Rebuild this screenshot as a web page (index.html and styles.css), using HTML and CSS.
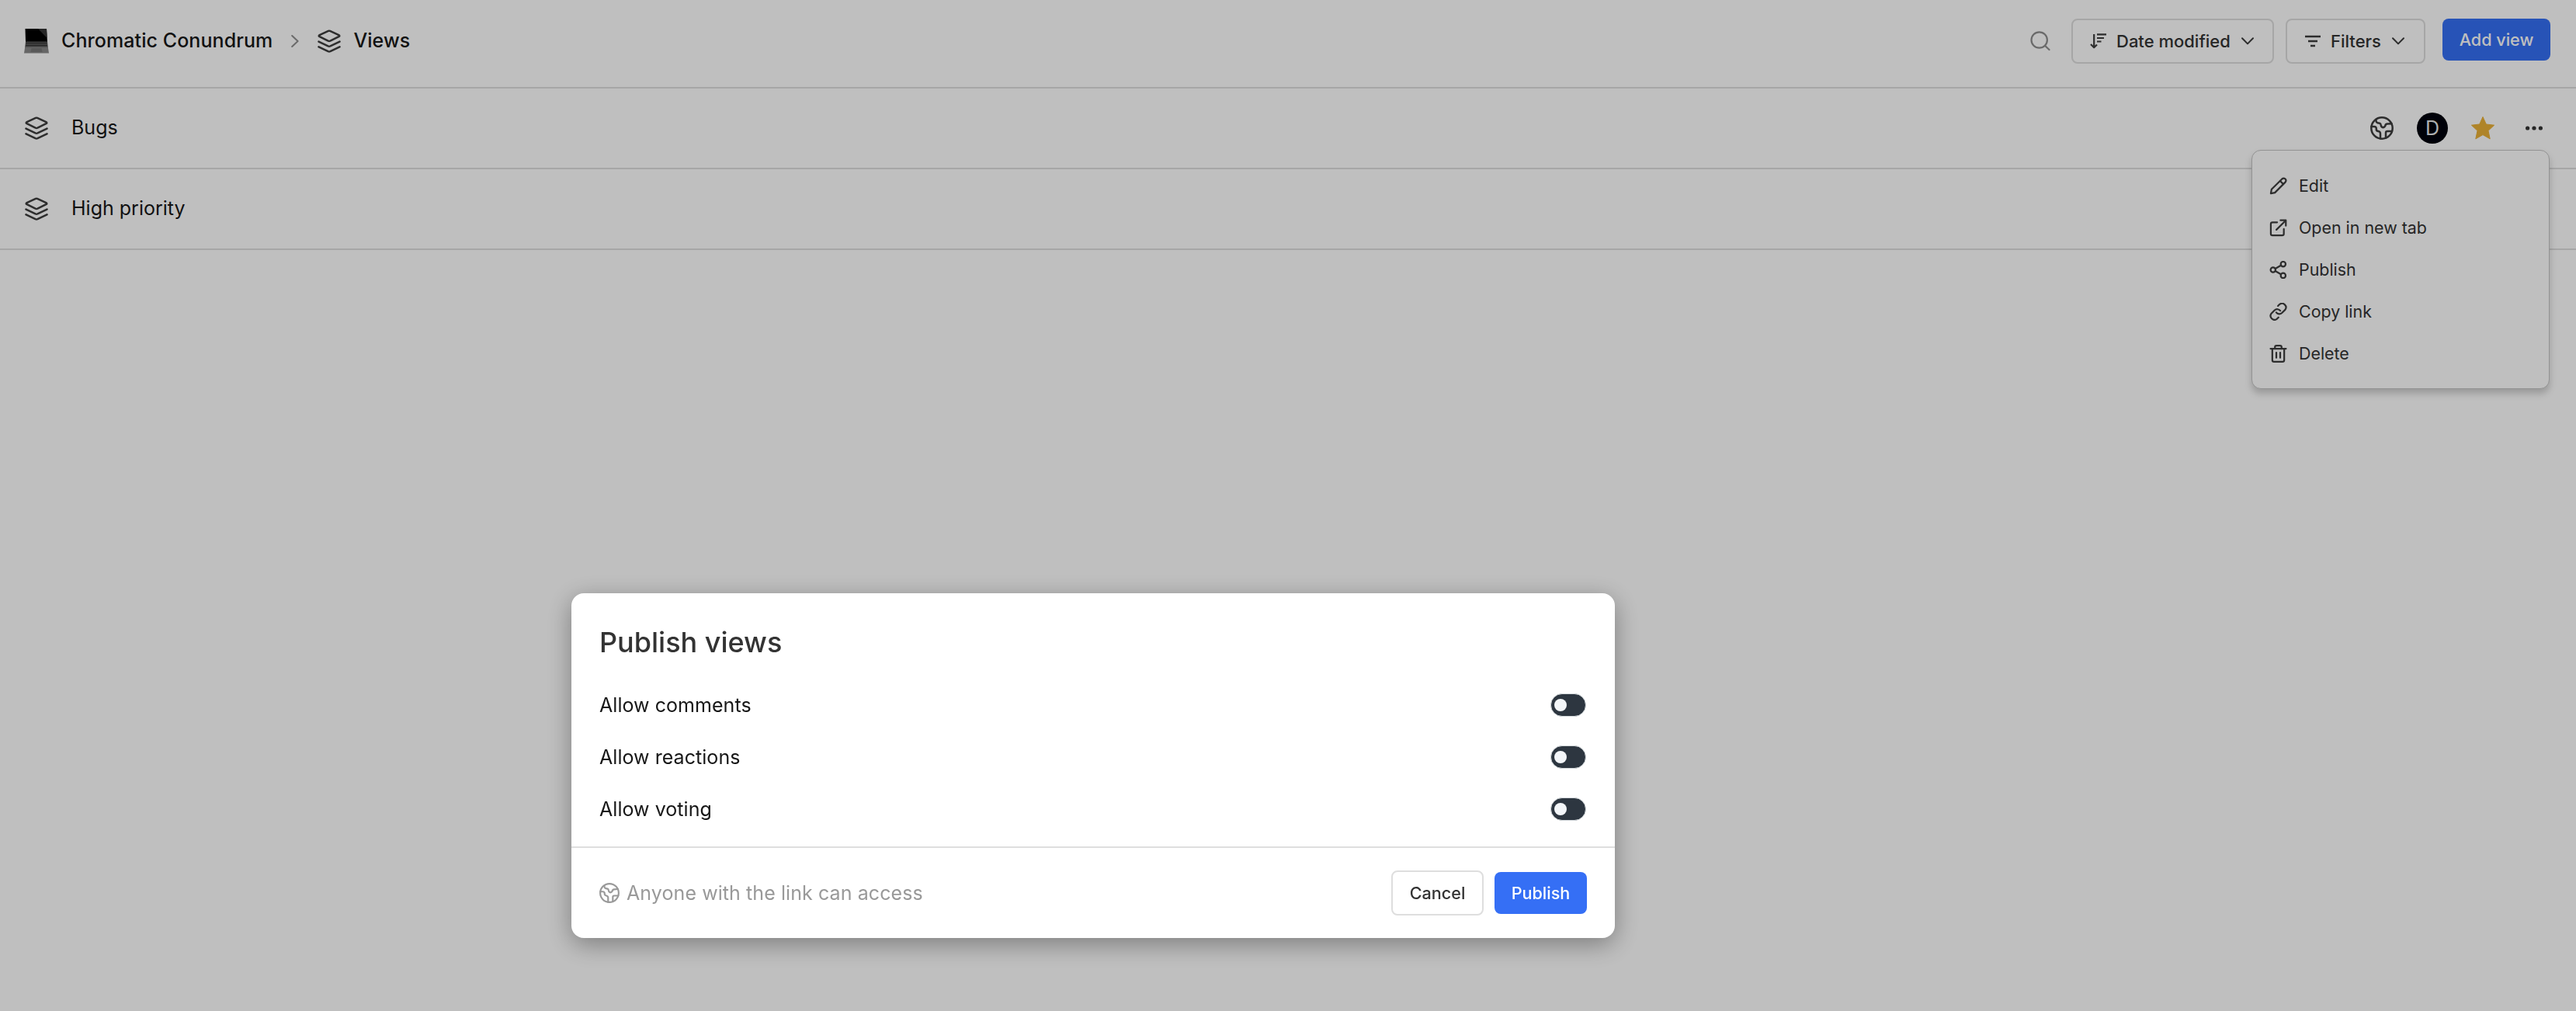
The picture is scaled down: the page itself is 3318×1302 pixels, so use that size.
FILE: index.html
```html
<!DOCTYPE html>
<html lang="en">
<head>
    <meta charset="UTF-8">
    <meta name="viewport" content="width=device-width, initial-scale=1.0">
    <title>Views</title>
    <link rel="stylesheet" href="styles.css">
</head>
<body>
    <!-- Shared icons -->
    <svg class="sprite">
        <symbol id="icon-layers" viewBox="0 0 30 30">
            <path d="M13.9 1.9 2.6 7.2Q.8 8.2 2.6 9.2L13.6 14.6Q15 15.2 16.4 14.6L27.4 9.2Q29.2 8.2 27.4 7.2L16.1 1.9Q15 1.4 13.9 1.9Z"/>
            <path d="M1.5 15.6 13.6 21.4Q15 22 16.4 21.4L28.5 15.6"/>
            <path d="M1.5 22.4 13.6 28.2Q15 28.8 16.4 28.2L28.5 22.4"/>
        </symbol>
        <symbol id="icon-globe" viewBox="0 0 30 30">
            <circle cx="15" cy="15" r="13.7"/>
            <path d="M7.5 4V5.8Q7.6 7.8 9.5 8.2L12 8.8Q13.3 9.2 13.6 10.6L14.2 12.8Q15.8 15 18 13.6L19.2 12.4Q19.5 9.8 22 9.6L27.5 9.2"/>
            <path d="M1.4 13 5 13Q7.3 13 7.8 15.3V17Q8 18.6 10.3 19 13 19.5 13 22V28.5"/>
            <path d="M20 27.8V21Q20 19 22 19H28"/>
        </symbol>
        <symbol id="icon-caret" viewBox="0 0 16 10">
            <path d="M1 1.2 8 8.4 15 1.2"/>
        </symbol>
    </svg>

    <header class="header">
        <div class="breadcrumb">
            <svg class="laptop" viewBox="0 0 32 32">
                <path d="M1.5 0H29L30 17H2Z" fill="#000"/>
                <path d="M18 0H29L29.6 12Z" fill="#333"/>
                <path d="M2 16.5H30L30.8 24H1.2Z" fill="#555"/>
                <path d="M2.5 18.5H29.5M2.2 21.5H30" stroke="#333" stroke-width="1"/>
                <path d="M1.2 23.5H30.8L32 31.5H0Z" fill="#898989"/>
                <path d="M9.5 25H22.5L23.5 30H8.5Z" fill="#777"/>
            </svg>
            <span class="crumb">Chromatic Conundrum</span>
            <svg class="icon separator" viewBox="0 0 10 16"><path d="M1.2 1 8.6 8 1.2 15"/></svg>
            <svg class="icon layers"><use href="#icon-layers"/></svg>
            <span class="crumb">Views</span>
        </div>
        <div class="actions">
            <svg class="icon search" viewBox="0 0 26 26"><circle cx="11.7" cy="11.5" r="10.2"/><path d="M19.2 19 24.5 24"/></svg>
            <button class="btn sort-btn">
                <svg class="icon sort" viewBox="0 0 22 20"><path d="M5.2 1V18M1 14 5.2 18.2 9 14.5M9 1.4H21M9 6H18M9 10.5H14.5"/></svg>
                <span>Date modified</span>
                <svg class="icon caret"><use href="#icon-caret"/></svg>
            </button>
            <button class="btn filter-btn">
                <svg class="icon filter" viewBox="0 0 20 16"><path d="M0 2H20M4 8H16M7 14H13"/></svg>
                <span>Filters</span>
                <svg class="icon caret"><use href="#icon-caret"/></svg>
            </button>
            <button class="btn btn-primary add-btn">Add view</button>
        </div>
    </header>

    <main>
        <div class="row">
            <svg class="icon layers"><use href="#icon-layers"/></svg>
            <span class="row-name">Bugs</span>
            <div class="row-actions">
                <svg class="icon globe"><use href="#icon-globe"/></svg>
                <span class="avatar">D</span>
                <svg class="star" viewBox="0 0 30 30"><path d="M15 .5 19.3 10 29.6 11.2 22 18.3 24.2 28.8 15 23.6 5.8 28.8 8 18.3.4 11.2 10.7 10Z"/></svg>
                <svg class="more" viewBox="0 0 22 6"><circle cx="2.6" cy="3" r="2.6"/><circle cx="11" cy="3" r="2.6"/><circle cx="19.4" cy="3" r="2.6"/></svg>
            </div>
        </div>
        <div class="row">
            <svg class="icon layers"><use href="#icon-layers"/></svg>
            <span class="row-name">High priority</span>
        </div>
    </main>

    <div class="menu">
        <div class="menu-item">
            <svg class="icon" viewBox="0 0 24 24"><path d="M2 22 3 16.5 16.8 2.8Q19.2.6 21.5 2.6 23.4 4.8 21.2 7.2L7.5 21Z"/><path d="M14.5 5.2 18.8 9.5"/></svg>
            <span>Edit</span>
        </div>
        <div class="menu-item">
            <svg class="icon" viewBox="0 0 24 24"><path d="M10.5 4.5H4.2Q2 4.5 2 6.7V19.8Q2 22 4.2 22H17.3Q19.5 22 19.5 19.8V13.5M15 1.8H22.2V9M22 2 9.5 14.5"/></svg>
            <span>Open in new tab</span>
        </div>
        <div class="menu-item">
            <svg class="icon" viewBox="0 0 24 24"><circle cx="5" cy="12" r="3.3"/><circle cx="18.6" cy="4.3" r="3.3"/><circle cx="18.6" cy="19.7" r="3.3"/><path d="M8 10.4 15.6 6M8 13.6 15.6 18"/></svg>
            <span>Publish</span>
        </div>
        <div class="menu-item">
            <svg class="icon" viewBox="0 0 24 24"><path d="M9.3 12.9A5.2 5.2 0 0 0 16.9 13.6L21.3 9.3A5.3 5.3 0 0 0 13.9 1.9L11.6 4.2M14.7 10.6A5.2 5.2 0 0 0 7.1 9.9L2.7 14.3A5.3 5.3 0 0 0 10.1 21.7L12.3 19.5"/></svg>
            <span>Copy link</span>
        </div>
        <div class="menu-item">
            <svg class="icon" viewBox="0 0 24 24"><path d="M1.6 5.3H22.4M7.5 5V3.4Q7.5 1.2 9.7 1.2H14.3Q16.5 1.2 16.5 3.4V5M4 5.5V20.5Q4 22.8 6.3 22.8H17.7Q20 22.8 20 20.5V5.5M9.4 10.5V17.5M14.6 10.5V17.5"/></svg>
            <span>Delete</span>
        </div>
    </div>

    <div class="overlay">
        <div class="modal">
            <div class="modal-body">
                <h2>Publish views</h2>
                <div class="option">
                    <span>Allow comments</span>
                    <span class="toggle"></span>
                </div>
                <div class="option">
                    <span>Allow reactions</span>
                    <span class="toggle"></span>
                </div>
                <div class="option">
                    <span>Allow voting</span>
                    <span class="toggle"></span>
                </div>
            </div>
            <div class="modal-footer">
                <svg class="icon globe"><use href="#icon-globe"/></svg>
                <span class="note">Anyone with the link can access</span>
                <button class="btn cancel-btn">Cancel</button>
                <button class="btn btn-primary publish-btn">Publish</button>
            </div>
        </div>
    </div>
</body>
</html>
```
FILE: styles.css
```css
* {
    margin: 0;
    padding: 0;
    box-sizing: border-box;
}

body {
    font-family: Inter, sans-serif;
    font-size: 25px;
    color: #171717;
    background: white;
    min-height: 100vh;
    overflow: hidden;
}

svg {
    display: block;
    flex-shrink: 0;
}

.sprite {
    position: absolute;
    width: 0;
    height: 0;
}

.icon {
    fill: none;
    stroke: #3c3c3c;
    stroke-width: 2.5;
    stroke-linecap: round;
    stroke-linejoin: round;
}

.header {
    display: flex;
    justify-content: space-between;
    align-items: flex-start;
    height: 114px;
    padding: 24px 33px 0 31px;
    border-bottom: 2px solid #dedede;
}

.breadcrumb {
    display: flex;
    align-items: center;
    height: 58px;
}

.laptop {
    width: 32px;
    height: 32px;
}

.crumb {
    font-weight: 500;
    line-height: 32px;
    letter-spacing: 0.08px;
    margin-left: 16px;
    margin-bottom: 2px;
}

.separator {
    width: 10px;
    height: 16px;
    margin: 0 24px;
    stroke: #8e8e8e;
    stroke-width: 2;
}

.layers {
    width: 30px;
    height: 30px;
}

.actions {
    display: flex;
    align-items: flex-start;
}

.search {
    width: 26px;
    height: 26px;
    margin: 16px 27px 0 0;
    stroke: #8e8e8e;
    stroke-width: 2.2;
}

.btn {
    display: flex;
    align-items: center;
    height: 58px;
    background: white;
    border: 2px solid #dedede;
    border-radius: 8px;
    color: #333;
    font-family: inherit;
    font-size: 22px;
    font-weight: 500;
    white-space: nowrap;
}

.btn-primary {
    justify-content: center;
    height: 54px;
    border: none;
    background: #356ff5;
    color: white;
    font-size: 21.6px;
}

.sort-btn {
    width: 261px;
    padding-left: 22px;
    margin-right: 15px;
}

.filter-btn {
    width: 180px;
    padding-left: 23px;
    margin-right: 22px;
}

.sort {
    width: 22px;
    height: 20px;
    margin-right: 12px;
    stroke-width: 2.2;
    stroke-linecap: butt;
}

.filter {
    width: 20px;
    height: 16px;
    margin-right: 13px;
    stroke-linecap: butt;
}

.caret {
    width: 16px;
    height: 10px;
    margin-left: 14px;
    stroke-width: 2;
}

.add-btn {
    width: 139px;
}

.row {
    display: flex;
    align-items: center;
    height: 104px;
    padding: 0 43px 0 32px;
    border-bottom: 2px solid #dedede;
}

.row-name {
    margin-left: 30px;
    margin-bottom: 2px;
    line-height: 32px;
}

.row-actions {
    display: flex;
    align-items: center;
    gap: 30px;
    margin-left: auto;
}

.globe {
    width: 30px;
    height: 30px;
}

.avatar {
    display: flex;
    align-items: center;
    justify-content: center;
    width: 40px;
    height: 40px;
    border-radius: 50%;
    background: #00020c;
    color: #e8ebee;
    font-size: 25px;
}

.star {
    width: 30px;
    height: 30px;
    fill: #eab037;
    stroke: #eab037;
    stroke-width: 1;
}

.more {
    width: 22px;
    height: 6px;
    margin-left: 10px;
    fill: #333;
}

/* Row dropdown */
.menu {
    position: absolute;
    top: 193px;
    right: 34px;
    width: 384px;
    height: 308px;
    padding: 18px 22px;
    background: white;
    border: 1px solid #c4c4c4;
    border-radius: 12px;
    box-shadow: 0 6px 10px rgba(0, 0, 0, 0.2);
}

.menu-item {
    display: flex;
    align-items: center;
    gap: 15px;
    height: 54px;
    font-size: 21.4px;
    color: #333;
}

.menu-item .icon {
    width: 23px;
    height: 23px;
    stroke-width: 2.3;
}

.overlay {
    position: fixed;
    inset: 0;
    background: rgba(0, 0, 0, 0.25);
}

.modal {
    position: absolute;
    top: 764px;
    left: 736px;
    width: 1344px;
    height: 444px;
    background: white;
    border-radius: 16px;
    box-shadow: 0 8px 32px rgba(0, 0, 0, 0.35);
}

.modal-body {
    height: 328px;
    padding: 40px 37px 0 36px;
    border-bottom: 2px solid #dedede;
}

.modal h2 {
    font-size: 36px;
    font-weight: 500;
    line-height: 46px;
    color: #333;
    margin-bottom: 24px;
}

.option {
    display: flex;
    align-items: center;
    justify-content: space-between;
    height: 67px;
    letter-spacing: 0.05px;
}

.toggle {
    width: 46px;
    height: 30px;
    padding: 6px 4px;
    border: 1px solid #d5dadd;
    border-radius: 15px;
    background: #2d3640;
}

.toggle::before {
    content: "";
    display: block;
    width: 16px;
    height: 16px;
    border-radius: 50%;
    background: #f3f6f9;
}

.modal-footer {
    display: flex;
    align-items: center;
    height: 116px;
    padding: 0 36px;
}

.modal-footer .globe {
    width: 26px;
    height: 26px;
    margin-right: 9px;
    stroke: #999;
}

.note {
    flex: 1;
    color: #999;
    letter-spacing: 0.08px;
}

.cancel-btn {
    width: 119px;
    justify-content: center;
    margin-right: 14px;
    font-size: 21.6px;
}

.publish-btn {
    width: 119px;
}
```
